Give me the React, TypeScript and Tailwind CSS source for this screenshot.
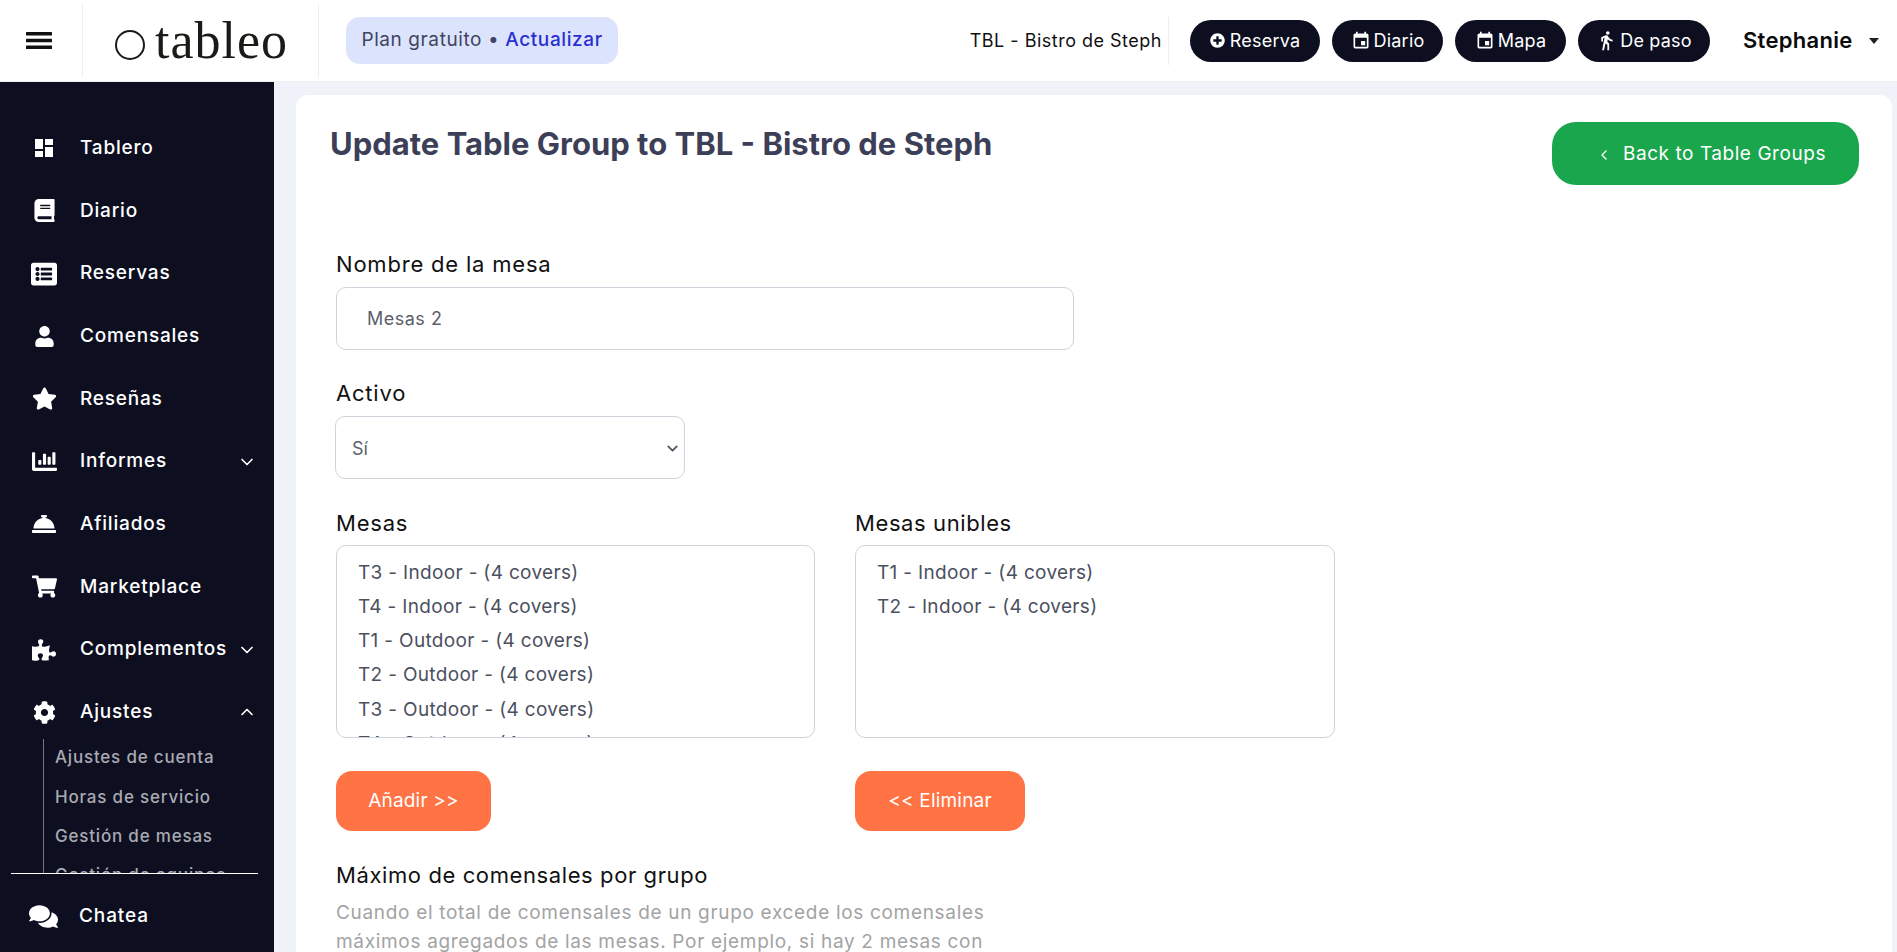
import {
  FaBook,
  FaChartBar,
  FaCog,
  FaComments,
  FaConciergeBell,
  FaListAlt,
  FaPlusCircle,
  FaPuzzlePiece,
  FaShoppingCart,
  FaStar,
  FaUser,
} from "react-icons/fa";
import { MdDashboard, MdDirectionsWalk, MdEvent } from "react-icons/md";
import { ChevronDown, ChevronLeft, ChevronUp } from "lucide-react";

const fontFamily = "font-['Inter','Noto_Sans',sans-serif]";

const navItems = [
  { label: "Tablero", icon: <MdDashboard size={24} /> },
  { label: "Diario", icon: <FaBook size={23} /> },
  { label: "Reservas", icon: <FaListAlt size={26} /> },
  { label: "Comensales", icon: <FaUser size={21} /> },
  { label: "Reseñas", icon: <FaStar size={25} /> },
  { label: "Informes", icon: <FaChartBar size={25} />, chevron: "down" },
  { label: "Afiliados", icon: <FaConciergeBell size={24} /> },
  { label: "Marketplace", icon: <FaShoppingCart size={25} /> },
  { label: "Complementos", icon: <FaPuzzlePiece size={24} />, chevron: "down" },
  { label: "Ajustes", icon: <FaCog size={23} />, chevron: "up" },
];

const subItems = ["Ajustes de cuenta", "Horas de servicio", "Gestión de mesas", "Gestión de equipos"];

const quickActions = [
  { label: "Reserva", icon: <FaPlusCircle size={15} className="mr-[2px]" />, width: "w-[130px]" },
  { label: "Diario", icon: <MdEvent size={20} />, width: "w-[111px]" },
  { label: "Mapa", icon: <MdEvent size={20} />, width: "w-[111px]" },
  { label: "De paso", icon: <MdDirectionsWalk size={21} />, width: "w-[132px]" },
];

const tables = [
  "T3 - Indoor - (4 covers)",
  "T4 - Indoor - (4 covers)",
  "T1 - Outdoor - (4 covers)",
  "T2 - Outdoor - (4 covers)",
  "T3 - Outdoor - (4 covers)",
  "T4 - Outdoor - (4 covers)",
];

const joinable = ["T1 - Indoor - (4 covers)", "T2 - Indoor - (4 covers)"];

function Logo() {
  return (
    <div className="flex items-center gap-[10px] text-[#1c1a17]">
      <div className="w-[30px] h-[30px] mt-[8px] rounded-full border-2 border-[#1c1a17]" />
      <span className="font-['Liberation_Serif',serif] text-[52px] leading-none tracking-[1px]">tableo</span>
    </div>
  );
}

function Header() {
  return (
    <header className="h-[82px] shrink-0 bg-white border-b border-[#eceef4] flex items-center">
      <div className="w-[83px] h-[73px] border-r border-[#eeeeee] flex items-center justify-center pr-[4px]">
        <svg width="26" height="17" viewBox="0 0 26 17" fill="#111111">
          <rect width="26" height="3.4" rx="0.5" />
          <rect y="6.8" width="26" height="3.4" rx="0.5" />
          <rect y="13.6" width="26" height="3.4" rx="0.5" />
        </svg>
      </div>
      <div className="w-[236px] h-[73px] border-r border-[#eeeeee] flex items-center pl-[32px]">
        <Logo />
      </div>
      <div className="ml-[27px] w-[272px] h-[47px] rounded-[14px] bg-[#dce3fd] flex items-center justify-center text-[19px] tracking-[0.6px]">
        <span className="text-[#3f4460]">Plan gratuito •&nbsp;</span>
        <a className="text-[#2b2fd0] font-medium">Actualizar</a>
      </div>

      <div className="ml-auto flex items-center h-[48px] border-r border-[#eeeeee] pr-[6px] text-[18px] tracking-[0.5px] text-[#111111]">
        TBL - Bistro de Steph
      </div>
      <div className="flex items-center gap-[12px] ml-[21px]">
        {quickActions.map((action) => (
          <button
            key={action.label}
            className={`${action.width} h-[42px] rounded-full bg-[#0d0f21] text-white text-[18px] tracking-[0.2px] flex items-center justify-center gap-[3px]`}
          >
            {action.icon}
            {action.label}
          </button>
        ))}
      </div>
      <div className="ml-[33px] w-[113px] whitespace-nowrap text-[22px] tracking-[0.3px] font-semibold text-[#0b0b0b]">Stephanie</div>
      <div className="ml-[13px] mr-[18px] w-0 h-0 border-x-[5px] border-x-transparent border-t-[6px] border-t-[#222222]" />
    </header>
  );
}

function Sidebar() {
  return (
    <aside className="w-[274px] shrink-0 bg-[#0d0f21] text-white flex flex-col">
      <div className="ml-[11px] mr-[16px] h-[792px] shrink-0 overflow-hidden border-b border-white pt-[35px]">
        {navItems.map((item) => (
          <div key={item.label} className="h-[62.67px] flex items-center pr-[1px]">
            <span className="w-[46px] ml-[10px] flex justify-center">{item.icon}</span>
            <span className="ml-[13px] text-[19px] tracking-[0.8px] font-medium">{item.label}</span>
            {item.chevron === "down" && <ChevronDown size={20} className="ml-auto" />}
            {item.chevron === "up" && <ChevronUp size={20} className="ml-auto" />}
          </div>
        ))}
        <div className="ml-[32px] -mt-[5px] border-l border-[#74757f] pl-[11px]">
          {subItems.map((item) => (
            <div key={item} className="h-[39.3px] flex items-center text-[17px] tracking-[0.8px] font-medium text-[#a9aab2]">
              {item}
            </div>
          ))}
        </div>
      </div>
      <div className="flex-1 flex items-center pl-[29px] pt-[7px]">
        <FaComments size={29} />
        <span className="ml-[21px] text-[19px] tracking-[0.9px] font-medium">Chatea</span>
      </div>
    </aside>
  );
}

function ListBox({ items, className }: { items: string[]; className: string }) {
  return (
    <div className={`${className} h-[193px] rounded-[10px] border border-[#cfd3dc] overflow-hidden pt-[10px] pl-[21px]`}>
      {items.map((item) => (
        <div key={item} className="h-[34.2px] flex items-center text-[19px] tracking-[0.33px] text-[#4b5060]">
          {item}
        </div>
      ))}
    </div>
  );
}

export default function App() {
  return (
    <div className={`${fontFamily} h-[952px] overflow-hidden flex flex-col bg-[#f0f2fa]`}>
      <Header />
      <div className="flex flex-1 min-h-0">
        <Sidebar />
        <main className="flex-1 ml-[22px] mr-[5px] mt-[13px] rounded-t-[12px] bg-white overflow-hidden">
          <div className="flex items-start justify-between pl-[34px] pr-[33px] pt-[27px]">
            <h1 className="text-[31px] leading-[44px] font-bold text-[#3d3f58]">Update Table Group to TBL - Bistro de Steph</h1>
            <button className="w-[307px] h-[63px] pt-[2px] rounded-[24px] bg-[#19a64c] text-white text-[19px] tracking-[0.55px] flex items-center pl-[44px] gap-[11px]">
              <ChevronLeft size={16} />
              Back to Table Groups
            </button>
          </div>

          <form className="pl-[40px] pt-[64px]">
            <label className="block text-[22px] tracking-[0.8px] leading-[30px] text-[#111111]">Nombre de la mesa</label>
            <input
              readOnly
              value="Mesas 2"
              className="block mt-[8px] w-[738px] h-[63px] rounded-[10px] border border-[#cfd3dc] pl-[30px] text-[18px] tracking-[0.5px] text-[#5b5f6b] outline-none"
            />

            <label className="block mt-[28px] text-[22px] tracking-[0.8px] leading-[30px] text-[#111111]">Activo</label>
            <div className="relative mt-[8px] -ml-[1px] w-[350px]">
              <select className="block w-full h-[63px] appearance-none rounded-[10px] border border-[#cfd3dc] pl-[16px] pt-[1px] text-[18px] text-[#5b5f6b] bg-white outline-none">
                <option>Sí</option>
                <option>No</option>
              </select>
              <ChevronDown size={17} strokeWidth={2.5} className="absolute right-[4px] top-[24px] text-[#4b5563]" />
            </div>

            <div className="mt-[29px] flex gap-[40px]">
              <div className="w-[479px]">
                <label className="block text-[22px] tracking-[0.8px] leading-[30px] text-[#111111]">Mesas</label>
                <ListBox items={tables} className="mt-[7px]" />
                <button type="button" className="block mt-[33px] w-[155px] h-[60px] rounded-[16px] bg-[#ff7344] text-white text-[19px] tracking-[0.2px]">
                  Añadir &gt;&gt;
                </button>
              </div>
              <div className="w-[480px]">
                <label className="block text-[22px] tracking-[0.6px] leading-[30px] text-[#111111]">Mesas unibles</label>
                <ListBox items={joinable} className="mt-[7px]" />
                <button type="button" className="block mt-[33px] w-[170px] h-[60px] rounded-[16px] bg-[#ff7344] text-white text-[19px] tracking-[0.2px]">
                  &lt;&lt; Eliminar
                </button>
              </div>
            </div>

            <label className="block mt-[29px] text-[22px] tracking-[0.6px] leading-[30px] text-[#111111]">Máximo de comensales por grupo</label>
            <p className="mt-[8px] w-[660px] text-[19px] tracking-[0.68px] leading-[29px] text-[#a3a3a3]">
              Cuando el total de comensales de un grupo excede los comensales máximos agregados de las mesas. Por ejemplo, si hay 2 mesas con
            </p>
          </form>
        </main>
      </div>
    </div>
  );
}
